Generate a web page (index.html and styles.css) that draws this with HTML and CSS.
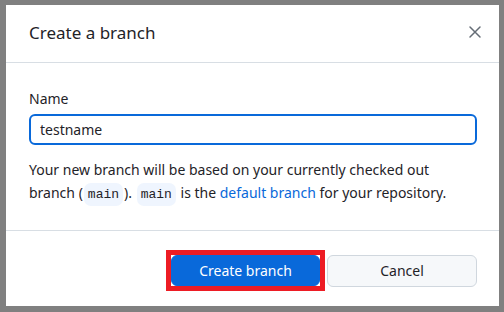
FILE: index.html
```html
<!DOCTYPE html>
<html>
<head>
  <title>Create a branch</title>
  <link rel="stylesheet" href="styles.css">
</head>
<body>
  <div class="dialog">
    <div class="dialog-header">
      <h2 class="dialog-title">Create a branch</h2>
      <button class="close-btn" aria-label="Close">
        <svg width="16" height="16" viewBox="0 0 16 16">
          <path d="M3 3l10 10M13 3L3 13" stroke="#656d76" stroke-width="1.5" stroke-linecap="round"/>
        </svg>
      </button>
    </div>

    <div class="dialog-body">
      <label class="field-label" for="branch-name">Name</label>
      <input type="text" id="branch-name" class="text-input" value="testname">
      <p class="note">
        Your new branch will be based on your currently checked out<br>
        branch (<code>main</code>). <code>main</code> is the <a href="#">default branch</a> for your repository.
      </p>
    </div>

    <div class="dialog-footer">
      <span class="highlight">
        <button class="btn btn-primary">Create branch</button>
      </span>
      <button class="btn">Cancel</button>
    </div>
  </div>
</body>
</html>
```

FILE: styles.css
```css
html, body {
  margin: 0;
  height: 100%;
}
body {
  background: #808080;
  padding: 5px 5px 6px 6px;
  box-sizing: border-box;
  font-family: "Noto Sans", "Open Sans", sans-serif;
  color: #1f2328;
}
.dialog {
  background: #fff;
  height: 100%;
  display: flex;
  flex-direction: column;
}
.dialog-header {
  height: 58px;
  box-sizing: border-box;
  display: flex;
  align-items: center;
  justify-content: space-between;
  padding: 0 12px 3px 23px;
  border-bottom: 1px solid #d8dee4;
}
.dialog-title {
  margin: 0;
  font-size: 17px;
  font-weight: 400;
}
.close-btn {
  border: 0;
  background: none;
  padding: 4px;
  display: flex;
}
.dialog-body {
  padding: 26px 22px 24px 23px;
  border-bottom: 1px solid #d8dee4;
}
.field-label {
  display: block;
  font-size: 14px;
  margin-bottom: 6px;
}
.text-input {
  display: block;
  box-sizing: border-box;
  width: 100%;
  height: 31px;
  padding: 0 9px;
  font: inherit;
  font-size: 14px;
  color: #1f2328;
  border: 2px solid #0969da;
  border-radius: 6px;
  outline: none;
}
.note {
  margin: 13px 0 0;
  font-size: 14px;
  line-height: 23px;
  color: #1f2328;
}
.note code {
  display: inline-block;
  font-family: "Liberation Mono", monospace;
  font-size: 13px;
  line-height: 23px;
  margin: 0 1px;
  padding: 0 4px;
  background: #eff5fe;
  border-radius: 7px;
}
.note a {
  color: #0969da;
  text-decoration: none;
}
.dialog-footer {
  flex: 1;
  display: flex;
  justify-content: flex-end;
  align-items: center;
  gap: 2px;
  padding: 4px 22px 0 23px;
}
.highlight {
  display: flex;
  border: 5px solid #ed1c24;
}
.btn {
  height: 32px;
  width: 150px;
  border: 1px solid #d0d7de;
  border-radius: 6px;
  background: #f6f8fa;
  font: inherit;
  font-size: 14px;
  color: #1f2328;
}
.btn-primary {
  width: 149px;
  height: 31px;
  background: #0969da;
  border-color: #0969da;
  color: #fff;
}
```
